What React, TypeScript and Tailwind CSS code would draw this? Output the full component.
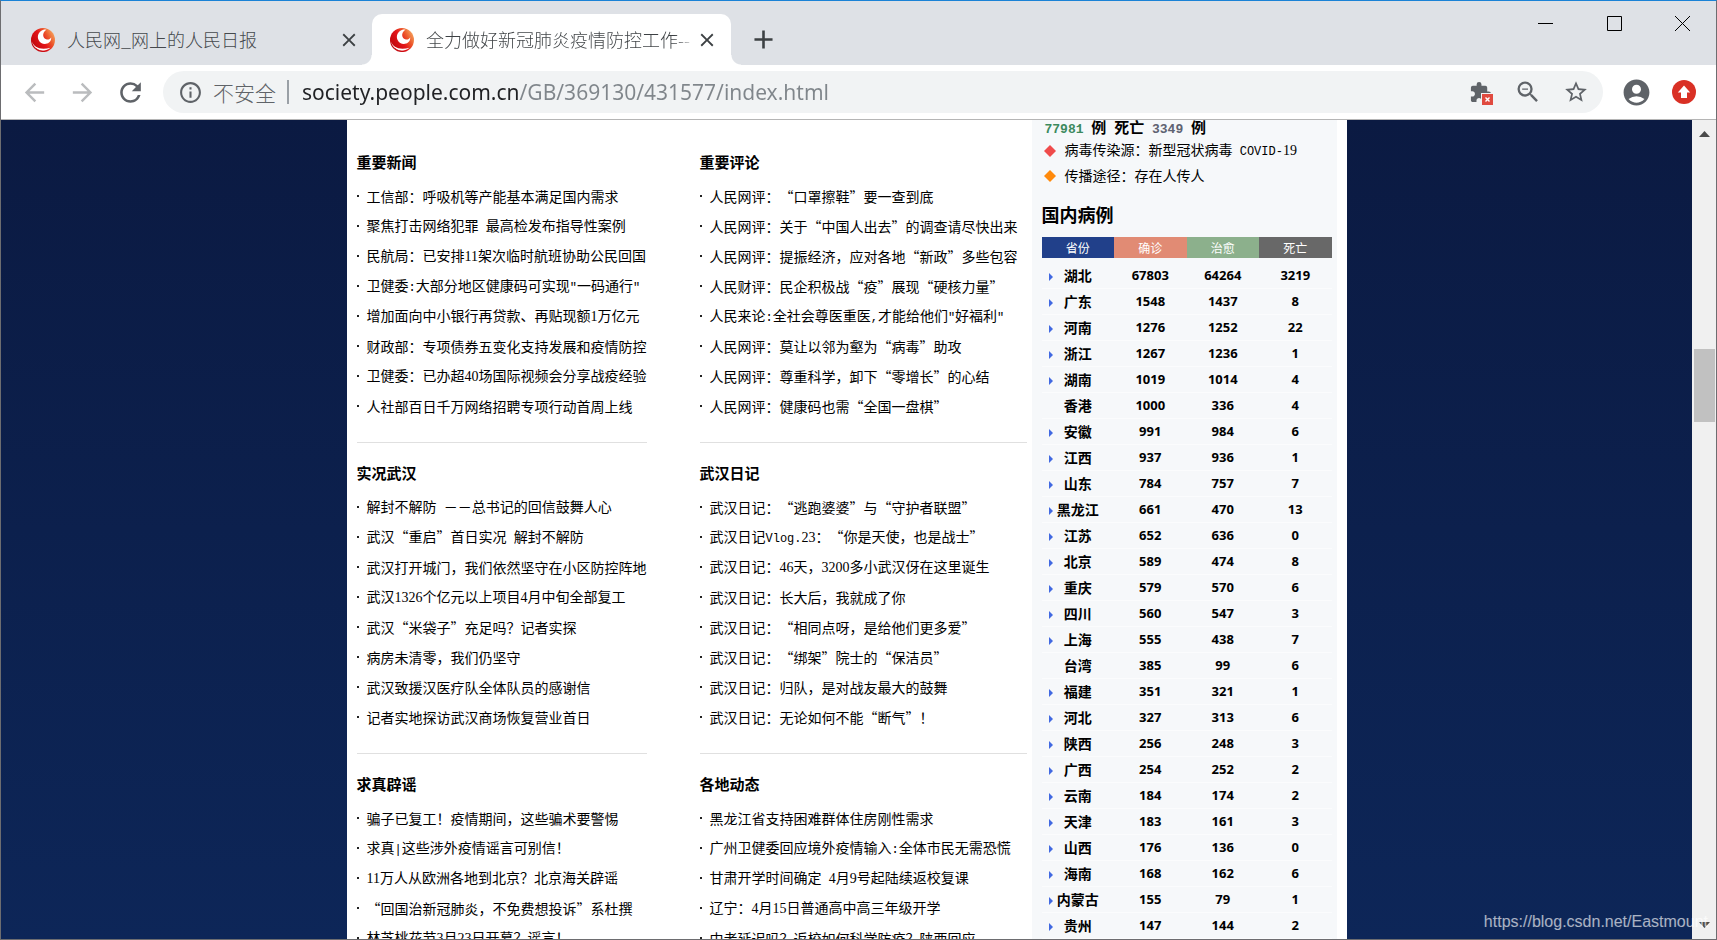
import React from "react";
import {
  MdAccountCircle,
  MdAdd,
  MdArrowBack,
  MdArrowForward,
  MdClose,
  MdExtension,
  MdInfoOutline,
  MdRefresh,
  MdStarBorder,
  MdZoomOut,
} from "react-icons/md";

type Section = { title: string; items: string[] };

const leftSections: Section[] = [
  {
    title: "重要新闻",
    items: [
      "工信部：呼吸机等产能基本满足国内需求",
      "聚焦打击网络犯罪 最高检发布指导性案例",
      "民航局：已安排11架次临时航班协助公民回国",
      '卫健委:大部分地区健康码可实现"一码通行"',
      "增加面向中小银行再贷款、再贴现额1万亿元",
      "财政部：专项债券五变化支持发展和疫情防控",
      "卫健委：已办超40场国际视频会分享战疫经验",
      "人社部百日千万网络招聘专项行动首周上线",
    ],
  },
  {
    title: "实况武汉",
    items: [
      "解封不解防 －－总书记的回信鼓舞人心",
      "武汉“重启”首日实况 解封不解防",
      "武汉打开城门，我们依然坚守在小区防控阵地",
      "武汉1326个亿元以上项目4月中旬全部复工",
      "武汉“米袋子”充足吗？记者实探",
      "病房未清零，我们仍坚守",
      "武汉致援汉医疗队全体队员的感谢信",
      "记者实地探访武汉商场恢复营业首日",
    ],
  },
  {
    title: "求真辟谣",
    items: [
      "骗子已复工！疫情期间，这些骗术要警惕",
      "求真|这些涉外疫情谣言可别信！",
      "11万人从欧洲各地到北京？北京海关辟谣",
      "“回国治新冠肺炎，不免费想投诉”系杜撰",
      "林芝桃花节3月23日开幕？谣言！",
    ],
  },
];

const rightSections: Section[] = [
  {
    title: "重要评论",
    items: [
      "人民网评：“口罩擦鞋”要一查到底",
      "人民网评：关于“中国人出去”的调查请尽快出来",
      "人民网评：提振经济，应对各地“新政”多些包容",
      "人民财评：民企积极战“疫”展现“硬核力量”",
      '人民来论:全社会尊医重医,才能给他们"好福利"',
      "人民网评：莫让以邻为壑为“病毒”助攻",
      "人民网评：尊重科学，卸下“零增长”的心结",
      "人民网评：健康码也需“全国一盘棋”",
    ],
  },
  {
    title: "武汉日记",
    items: [
      "武汉日记：“逃跑婆婆”与“守护者联盟”",
      "武汉日记Vlog.23：“你是天使，也是战士”",
      "武汉日记：46天，3200多小武汉伢在这里诞生",
      "武汉日记：长大后，我就成了你",
      "武汉日记：“相同点呀，是给他们更多爱”",
      "武汉日记：“绑架”院士的“保洁员”",
      "武汉日记：归队，是对战友最大的鼓舞",
      "武汉日记：无论如何不能“断气”！",
    ],
  },
  {
    title: "各地动态",
    items: [
      "黑龙江省支持困难群体住房刚性需求",
      "广州卫健委回应境外疫情输入:全体市民无需恐慌",
      "甘肃开学时间确定 4月9号起陆续返校复课",
      "辽宁：4月15日普通高中高三年级开学",
      "中考延迟吗？返校如何科学防疫？陕西回应",
    ],
  },
];

const cases: [string, number, number, number][] = [
  ["湖北", 67803, 64264, 3219],
  ["广东", 1548, 1437, 8],
  ["河南", 1276, 1252, 22],
  ["浙江", 1267, 1236, 1],
  ["湖南", 1019, 1014, 4],
  ["香港", 1000, 336, 4],
  ["安徽", 991, 984, 6],
  ["江西", 937, 936, 1],
  ["山东", 784, 757, 7],
  ["黑龙江", 661, 470, 13],
  ["江苏", 652, 636, 0],
  ["北京", 589, 474, 8],
  ["重庆", 579, 570, 6],
  ["四川", 560, 547, 3],
  ["上海", 555, 438, 7],
  ["台湾", 385, 99, 6],
  ["福建", 351, 321, 1],
  ["河北", 327, 313, 6],
  ["陕西", 256, 248, 3],
  ["广西", 254, 252, 2],
  ["云南", 184, 174, 2],
  ["天津", 183, 161, 3],
  ["山西", 176, 136, 0],
  ["海南", 168, 162, 6],
  ["内蒙古", 155, 79, 1],
  ["贵州", 147, 144, 2],
];

const withoutDetails = ["香港", "台湾"];

/* Latin runs are set half as wide as a Chinese glyph: digits in a serif face, the rest in monospace. */
function Mixed({ text }: { text: string }) {
  return (
    <>
      {text.split(/([0-9]+|[\x20-\x2f\x3a-\x7e]+)/).map((part, i) => {
        if (i % 2 === 0) return part;
        const face = /^[0-9]/.test(part)
          ? "font-['Liberation_Serif',serif] text-[14px]"
          : "whitespace-pre font-['Liberation_Mono',monospace] text-[12px]";
        return (
          <span key={i} className={face}>
            {part}
          </span>
        );
      })}
    </>
  );
}

function SiteLogo() {
  return (
    <svg viewBox="0 0 24 24" className="size-6 shrink-0" aria-hidden="true">
      <defs>
        <linearGradient id="swirl" x1="0" y1="0.75" x2="1" y2="0.15">
          <stop offset="0" stopColor="#b8040a" />
          <stop offset="0.45" stopColor="#e3151a" />
          <stop offset="0.7" stopColor="#ec5a2c" />
          <stop offset="1" stopColor="#f8b56a" />
        </linearGradient>
      </defs>
      <circle cx="12" cy="12" r="12" fill="url(#swirl)" />
      <path
        d="M12.500 1.800C7.500 3.500 5.800 8 7.600 12c1.800 4 7 5.300 10.400 2.600 1.700-1.400 2.400-3.300 2.200-5.300-1 2-3.200 2.800-5 2C12 10 11.300 6.300 13.500 3.500c.5-.7 1.200-1.300 2-1.700-1-.3-2-.3-3 0z"
        fill="#fff"
      />
      <path d="M1 13.500c2 6 8.500 8.800 18.500 6.200-3 2.300-5.500 3-8 3C6 22.500 2 18.500 1 13.500z" fill="#fff" />
      <path d="M2.600 17.500c3 4.500 8.500 6 13.900 5.600A12 12 0 0 1 2.600 17.500z" fill="#c4060c" />
    </svg>
  );
}

function TabStrip() {
  return (
    <header className="flex h-16 shrink-0 items-end bg-[#dee1e6]">
      <div role="tablist" className="flex h-[51px] text-[18px] font-light text-[#45494d]">
        <div role="tab" aria-selected="false" className="flex w-[371px] items-center pl-[30px] pr-[12px]">
          <SiteLogo />
          <span className="ml-3 flex-1 truncate">人民网_网上的人民日报</span>
          <button type="button" aria-label="关闭标签页" className="text-[#3c4043]">
            <MdClose size={22} />
          </button>
        </div>
        <div role="tab" aria-selected="true" className="relative flex w-[359px] items-center rounded-t-[10px] bg-white pl-[18px] pr-[13px]">
          <span className="absolute bottom-0 right-full size-2.5 bg-[radial-gradient(circle_at_0_0,transparent_9px,white_10px)]" />
          <span className="absolute bottom-0 left-full size-2.5 bg-[radial-gradient(circle_at_100%_0,transparent_9px,white_10px)]" />
          <SiteLogo />
          <span className="ml-3 flex-1 overflow-hidden whitespace-nowrap bg-[linear-gradient(to_right,#3c4043_92%,transparent)] bg-clip-text text-transparent">
            全力做好新冠肺炎疫情防控工作--
          </span>
          <button type="button" aria-label="关闭标签页" className="text-[#3c4043]">
            <MdClose size={22} />
          </button>
        </div>
        <button type="button" aria-label="新标签页" className="ml-[17px] w-8 text-[#3c4043]">
          <MdAdd size={31} />
        </button>
      </div>
      <div className="ml-auto flex h-[44px] self-start text-black">
        <button type="button" aria-label="最小化" className="flex w-[69px] items-center justify-center">
          <svg viewBox="0 0 15 15" className="size-[15px]"><path d="M0 7.500h15" stroke="currentColor" /></svg>
        </button>
        <button type="button" aria-label="最大化" className="flex w-[69px] items-center justify-center">
          <svg viewBox="0 0 15 15" className="size-[15px]"><path d="M.5.500h14v14H.5z" stroke="currentColor" fill="none" /></svg>
        </button>
        <button type="button" aria-label="关闭" className="flex w-[67px] items-center justify-center">
          <svg viewBox="0 0 15 15" className="size-[15px]"><path d="M0 0l15 15M15 0L0 15" stroke="currentColor" /></svg>
        </button>
      </div>
    </header>
  );
}

function Toolbar() {
  const nav = "flex w-12 items-center justify-center";
  return (
    <div className="flex h-[55px] shrink-0 items-center border-b border-[#b5b5b5] bg-white pl-[9px] pr-2 text-[#5f6368]">
      <button type="button" aria-label="后退" className={`${nav} text-[#babcbe]`}><MdArrowBack size={29} /></button>
      <button type="button" aria-label="前进" className={`${nav} text-[#babcbe]`}><MdArrowForward size={29} /></button>
      <button type="button" aria-label="重新加载" className={nav}><MdRefresh size={31} /></button>
      <div className="mx-[9px] flex h-[42px] flex-1 items-center rounded-full bg-[#f1f3f4] pl-[15px] pr-[3px]">
        <MdInfoOutline size={25} />
        <label htmlFor="address" className="ml-[10px] text-[21px] font-light leading-[40px]">不安全</label>
        <span className="ml-[11px] h-6 w-0.5 bg-[#9aa0a6]" />
        <input
          id="address"
          defaultValue="society.people.com.cn/GB/369130/431577/index.html"
          className="ml-[13px] h-full min-w-0 flex-1 bg-[linear-gradient(to_right,#202124_218px,#80868b_218px)] bg-clip-text font-['Noto_Sans',sans-serif] text-[21px] text-transparent outline-none"
        />
        <button type="button" aria-label="插件已屏蔽" className={`${nav} relative`}>
          <MdExtension size={23} />
          <svg viewBox="0 0 12 12" className="absolute -bottom-px right-[11px] size-3" aria-hidden="true">
            <path d="M0 0h12v12H0z" fill="#f1f3f4" />
            <path d="M1 1h11v11H1z" fill="#e04a3f" />
            <path d="M4.500 4.500l4 4M8.500 4.500l-4 4" stroke="#fff" strokeWidth="1.400" />
          </svg>
        </button>
        <button type="button" aria-label="缩放" className={nav}><MdZoomOut size={28} /></button>
        <button type="button" aria-label="收藏" className={nav}><MdStarBorder size={26} /></button>
      </div>
      <button type="button" aria-label="账户" className={nav}><MdAccountCircle size={31} /></button>
      <button type="button" aria-label="更新" className={nav}>
        <svg viewBox="0 0 24 24" className="size-6">
          <circle cx="12" cy="12" r="12" fill="#d93025" />
          <path d="M12 5.500l6.200 7H15V18H9v-5.500H5.800z" fill="#fff" />
        </svg>
      </button>
    </div>
  );
}

function NewsColumn({ sections }: { sections: Section[] }) {
  return (
    <div className="min-w-0">
      {sections.map((section, i) => (
        <section key={section.title} className={i === 0 ? "pb-[21px] pt-[31px]" : "border-t border-[#e0e0e0] pb-[21px] pt-[19px]"}>
          <h2 className="text-[15px] font-bold leading-[22px]">{section.title}</h2>
          <ul className="mt-2">
            {section.items.map((item) => (
              <li key={item} className="flex h-[30px] items-center whitespace-nowrap text-[14px] leading-[30px]">
                <span className="mr-2 size-0.5 bg-[#222]" />
                <a href="#news"><Mixed text={item} /></a>
              </li>
            ))}
          </ul>
        </section>
      ))}
    </div>
  );
}

function Fact({ color, text }: { color: string; text: string }) {
  return (
    <p className="flex h-[25px] items-center gap-[9px] pl-0.5 text-[14px] leading-[25px]">
      <svg viewBox="0 0 12 12" className={`size-3 ${color}`} aria-hidden="true">
        <path d="M6 0l6 6-6 6-6-6z" fill="currentColor" />
      </svg>
      <span><Mixed text={text} /></span>
    </p>
  );
}

function CaseSidebar() {
  const digits = "whitespace-pre font-['Liberation_Mono',monospace] text-[13px]";
  return (
    <aside className="w-[305px] bg-[#f6f8fa] pl-[10px] pr-[5px]">
      <p className="mb-1 h-[14px] whitespace-pre pl-[3px] text-[15px] font-bold leading-[14px]">
        <span className={`${digits} text-[#3c8a5e]`}>77981</span>
        <span className={digits}> </span>例<span className={digits}> </span>死亡<span className={digits}> </span>
        <span className={`${digits} text-[#5f6372]`}>3349</span>
        <span className={digits}> </span>例
      </p>
      <Fact color="text-[#ef4b4b]" text="病毒传染源：新型冠状病毒 COVID-19" />
      <Fact color="text-[#ff8a0c]" text="传播途径：存在人传人" />
      <h2 className="mb-3 mt-[15px] text-[18px] font-bold leading-[22px]">国内病例</h2>
      <table className="w-full table-fixed border-collapse text-center">
        <thead className="text-[12px] leading-[21px] text-white">
          <tr>
            <th scope="col" className="bg-[#21408a] p-0 font-normal">省份</th>
            <th scope="col" className="bg-[#e18b74] p-0 font-normal">确诊</th>
            <th scope="col" className="bg-[#8cb08c] p-0 font-normal">治愈</th>
            <th scope="col" className="bg-[#686868] p-0 font-normal">死亡</th>
          </tr>
        </thead>
        <tbody className="font-bold leading-[25px] before:block before:h-[5px]">
          {cases.map(([name, confirmed, cured, dead]) => (
            <tr key={name} className="border-b border-[#fbfcfd] font-['Noto_Sans','Noto_Sans_CJK_SC',sans-serif] text-[13px]">
              <th scope="row" className="relative p-0 text-[14px]">
                {!withoutDetails.includes(name) && (
                  <svg viewBox="0 0 4 8" className="absolute left-[7px] top-[10px] h-2 w-1" aria-hidden="true">
                    <path d="M0 0l4 4-4 4z" fill="#4169e1" />
                  </svg>
                )}
                {name}
              </th>
              <td className="p-0">{confirmed}</td>
              <td className="p-0">{cured}</td>
              <td className="p-0">{dead}</td>
            </tr>
          ))}
        </tbody>
      </table>
    </aside>
  );
}

function Scrollbar() {
  return (
    <div className="flex w-6 shrink-0 flex-col items-center bg-[#f0f0f0] py-[11px]" aria-hidden="true">
      <svg viewBox="0 0 11 6" className="h-1.5 w-[11px] shrink-0"><path d="M5.500 0L11 6H0z" fill="#4a4a4a" /></svg>
      <div className="w-full grow-[212]" />
      <div className="h-[73px] w-[21px] bg-[#c1c1c1]" />
      <div className="w-full grow-[500]" />
      <svg viewBox="0 0 11 6" className="h-1.5 w-[11px] shrink-0"><path d="M0 0h11L5.500 6z" fill="#4a4a4a" /></svg>
    </div>
  );
}

export default function App() {
  return (
    <div className="relative flex h-screen flex-col overflow-hidden border border-[#6d6d70] border-t-[#1a82d6] font-['Noto_Sans_CJK_SC',sans-serif] text-black [text-spacing-trim:space-all]">
      <TabStrip />
      <Toolbar />
      <div className="flex min-h-0 flex-1">
        <div className="min-w-0 flex-1 overflow-hidden bg-[linear-gradient(to_bottom,#0b1a42,#0d2658)]">
          <main className="mx-auto flex w-full max-w-[1000px] justify-between bg-white px-[10px]">
            <div className="grid flex-1 grid-cols-[290fr_327fr] gap-x-[53px] pr-[5px]">
              <NewsColumn sections={leftSections} />
              <NewsColumn sections={rightSections} />
            </div>
            <CaseSidebar />
          </main>
        </div>
        <Scrollbar />
      </div>
      <p className="pointer-events-none absolute bottom-[7px] right-[8px] font-['Liberation_Sans',sans-serif] text-[16px] leading-5 text-white/65">
        https://blog.csdn.net/Eastmount
      </p>
    </div>
  );
}
